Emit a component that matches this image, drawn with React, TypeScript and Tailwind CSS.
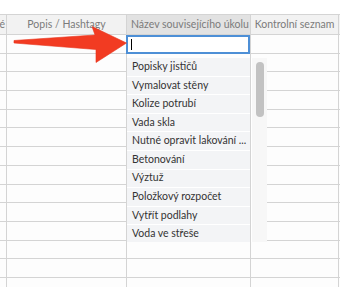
import React from 'react'

// Column widths include each cell's right border
const COLS = ['w-[7px]', 'w-[120px]', 'w-[124px]', 'w-[88px]', 'w-[20px]']

const HEADERS: { label: string; active?: boolean }[] = [
  { label: 'é' },
  { label: 'Popis / Hashtagy' },
  { label: 'Název souvisejícího úkolu', active: true },
  { label: 'Kontrolní seznam' },
  { label: '' },
]

const TASKS = [
  'Popisky jističů',
  'Vymalovat stěny',
  'Kolize potrubí',
  'Vada skla',
  'Nutné opravit lakování ...',
  'Betonování',
  'Výztuž',
  'Položkový rozpočet',
  'Vytřít podlahy',
  'Voda ve střeše',
]

function Arrow() {
  return (
    <svg className="absolute left-0 top-0" width="140" height="70" viewBox="0 0 140 70">
      <path
        d="M14 40.5 L95 35 L92 26.5 L126.5 43 L96 62.5 L96 49.5 L14 43 Z"
        fill="#f23b22"
        stroke="#e8341c"
        strokeWidth="0.6"
        strokeLinejoin="round"
      />
    </svg>
  )
}

export default function App() {
  return (
    <div className="relative h-[287px] w-[340px] overflow-hidden bg-white font-['Lato',sans-serif]">
      {/* Table */}
      <div className="pt-[14px]">
        {/* Header */}
        <div className="flex h-[21px] border-y border-[#d4d4d4]">
          {HEADERS.map((h, i) => (
            <div
              key={i}
              className={`${COLS[i]} shrink-0 flex items-center overflow-hidden whitespace-nowrap border-r border-[#d4d4d4] text-[10.5px] text-[#7b7b7b] ${
                h.active ? 'bg-[#e2e2e2] pl-[4px]' : 'bg-[#f2f2f2] justify-center'
              } ${i === 0 ? 'justify-end pr-px' : ''}`}
            >
              {h.label}
            </div>
          ))}
        </div>
        {/* Body rows */}
        {Array.from({ length: 14 }).map((_, r) => (
          <div key={r} className="flex h-[18.7px] border-b border-[#d4d4d4]">
            {COLS.map((c, i) => (
              <div key={i} className={`${c} shrink-0 border-r border-[#d4d4d4] bg-[#fdfdfd]`} />
            ))}
          </div>
        ))}
      </div>

      {/* Editing input */}
      <div className="absolute left-[126px] top-[35px] h-[19px] w-[124px] border-2 border-[#4d8fd6] bg-white">
        <div className="ml-[3px] mt-[2px] h-[11px] w-px bg-black" />
      </div>

      {/* Dropdown */}
      <div className="absolute left-[127px] top-[58px] flex h-[184px] bg-white">
        <div className="flex w-[123px] flex-col overflow-hidden">
          {TASKS.map((t) => (
            <div
              key={t}
              className="flex h-[18.6px] shrink-0 items-center border-b border-white bg-[#f3f4f6] pl-[5px] text-[10.5px] text-[#333] whitespace-nowrap"
            >
              {t}
            </div>
          ))}
        </div>
        <div className="w-px bg-[#d4d4d4]" />
        <div className="w-px bg-white" />
        <div className="w-[15px] bg-[#f7f7f7] pt-[4px] pl-[4px]">
          <div className="h-[55px] w-[8px] rounded-full bg-[#c2c2c2]" />
        </div>
      </div>

      <Arrow />
    </div>
  )
}
